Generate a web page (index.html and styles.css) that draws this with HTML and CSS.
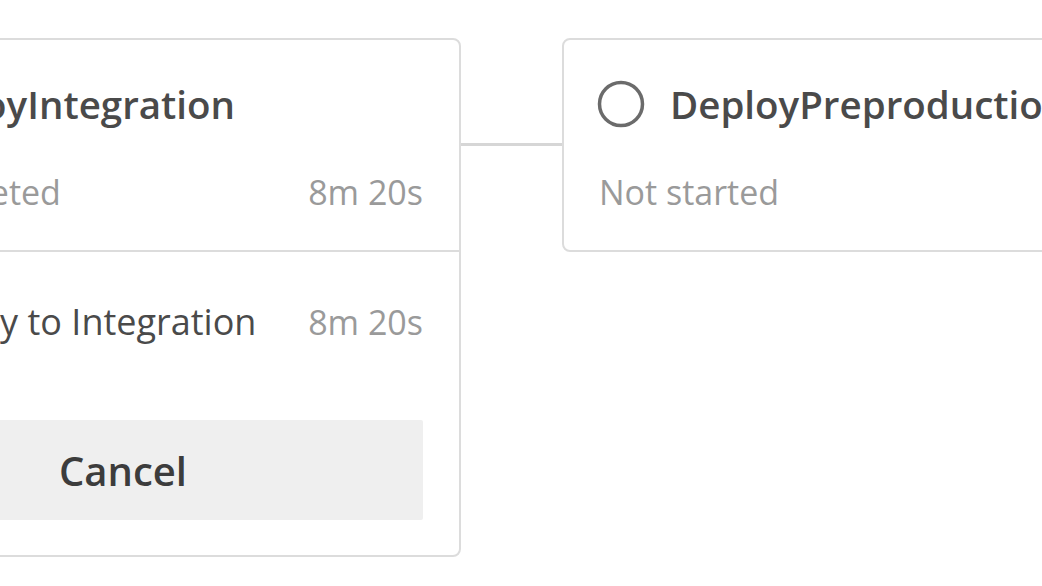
FILE: index.html
```html
<!DOCTYPE html>
<html lang="en">
<head>
<meta charset="utf-8">
<title>Pipeline stages</title>
<link rel="stylesheet" href="styles.css">
</head>
<body>
<div class="canvas">
  <section class="stage stage-running">
    <div class="stage-head">
      <div class="title-row">
        <svg class="status-icon running" viewBox="0 0 48 48" aria-hidden="true">
          <circle cx="24" cy="24" r="20" fill="none" stroke="#0078d4" stroke-width="4" stroke-dasharray="90 40"/>
        </svg>
        <span class="stage-title">DeployIntegration</span>
      </div>
      <div class="meta-row">
        <span class="status-text">Job completed</span>
        <span class="duration">8m 20s</span>
      </div>
    </div>
    <div class="stage-body">
      <div class="job-row">
        <svg class="job-icon" viewBox="0 0 40 40" aria-hidden="true">
          <circle cx="20" cy="20" r="16" fill="none" stroke="#0078d4" stroke-width="4" stroke-dasharray="70 30"/>
        </svg>
        <span class="job-name">Deploy to Integration</span>
        <span class="duration">8m 20s</span>
      </div>
      <button class="cancel-btn" type="button">Cancel</button>
    </div>
  </section>

  <div class="connector"></div>

  <section class="stage stage-pending">
    <div class="stage-head">
      <div class="title-row">
        <svg class="status-icon" viewBox="0 0 48 48" aria-hidden="true">
          <circle cx="24" cy="24" r="21.5" fill="none" stroke="#6b6b6b" stroke-width="3.5"/>
        </svg>
        <span class="stage-title">DeployPreproduction</span>
      </div>
      <div class="meta-row">
        <span class="status-text">Not started</span>
      </div>
    </div>
  </section>
</div>
</body>
</html>
```

FILE: styles.css
```css
html, body {
  margin: 0;
  padding: 0;
  background: #ffffff;
  overflow: hidden;
}

body {
  width: 1042px;
  height: 586px;
  font-family: "Open Sans", "Noto Sans", sans-serif;
  color: #444444;
}

.canvas {
  display: flex;
  align-items: flex-start;
  padding-top: 38px;
  margin-left: -204px;
}

.stage {
  flex: 0 0 auto;
  width: 665px;
  box-sizing: border-box;
  border: 2px solid #dcdcdc;
  border-radius: 8px;
  background: #ffffff;
}

.stage-head {
  padding: 40px 36px 36px 33px;
  display: flex;
  flex-direction: column;
  gap: 42px;
}

.stage-running .stage-head {
  border-bottom: 2px solid #dcdcdc;
}

.stage-running .title-row {
  gap: 19px;
}

.title-row {
  display: flex;
  align-items: center;
  gap: 25px;
  height: 48px;
}

.status-icon {
  width: 48px;
  height: 48px;
  flex: 0 0 auto;
}

.stage-title {
  font-size: 38.5px;
  font-weight: 600;
  color: #4a4a4a;
  white-space: nowrap;
  line-height: 48px;
}

.meta-row {
  display: flex;
  justify-content: space-between;
  align-items: center;
  height: 44px;
  padding-left: 2px;
}

.status-text,
.duration {
  font-size: 34px;
  color: #9a9a9a;
  line-height: 44px;
  white-space: nowrap;
}

.stage-body {
  padding: 46px 36px 35px 25px;
  display: flex;
  flex-direction: column;
  gap: 74px;
}

.job-row {
  display: flex;
  align-items: center;
  height: 48px;
}

.job-icon {
  width: 40px;
  height: 40px;
  flex: 0 0 auto;
  margin-left: 12px;
  margin-right: 26px;
}

.job-name {
  flex: 1 1 auto;
  font-size: 36px;
  color: #4a4a4a;
  line-height: 48px;
  white-space: nowrap;
}

.cancel-btn {
  height: 100px;
  border: none;
  border-radius: 2px;
  background: #efefef;
  font-family: "Open Sans", "Noto Sans", sans-serif;
  font-size: 40px;
  font-weight: 600;
  color: #3c3c3c;
  padding: 0;
}

.connector {
  flex: 0 0 auto;
  width: 101px;
  height: 3px;
  margin-top: 105px;
  background: #d6d6d6;
}
```
